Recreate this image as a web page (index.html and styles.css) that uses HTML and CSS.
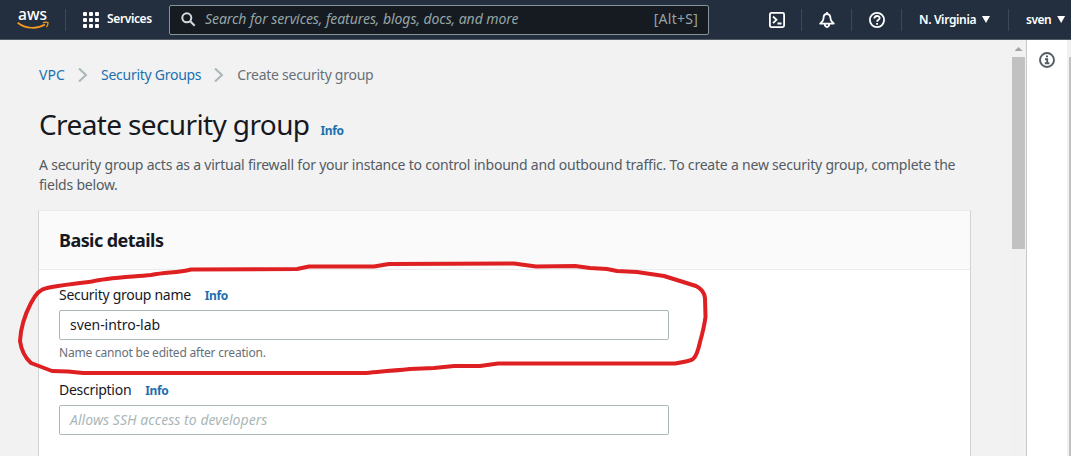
FILE: index.html
```html
<!DOCTYPE html>
<html lang="en">
<head>
<meta charset="utf-8">
<title>Create security group</title>
<link rel="stylesheet" href="styles.css">
</head>
<body>
<header class="topbar">
  <svg class="logo" width="34" height="36" viewBox="0 -6 34 36">
    <text class="logo-text" x="1" y="12" textLength="29" lengthAdjust="spacingAndGlyphs">aws</text>
    <path d="M.7 14.7C9 21 20 21.300 28 16.500" fill="none" stroke="#f79a20" stroke-width="1.700"/>
    <path d="M25.800 14.800Q29 13.800 31 14.500Q31.200 17 29.400 19.200" fill="none" stroke="#f79a20" stroke-width="1.200"/>
  </svg>
  <i class="divider"></i>
  <div class="services">
    <div class="grid"><b></b><b></b><b></b><b></b><b></b><b></b><b></b><b></b><b></b></div>
    <span class="services-label">Services</span>
  </div>
  <div class="search">
    <svg width="15" height="15" viewBox="0 0 15 15" fill="none" stroke="#d5dbdb" stroke-width="2"><circle cx="5.800" cy="5.800" r="4.500"/><path d="M9 9l4.700 4.700"/></svg>
    <span class="search-text">Search for services, features, blogs, docs, and more</span>
    <span class="shortcut">[Alt+S]</span>
  </div>
  <nav class="tools">
    <div class="tool"><svg width="16" height="16" viewBox="0 0 16 16" fill="none" stroke="#fff" stroke-width="1.800"><rect x=".9" y=".9" width="14.200" height="14.200" rx="1.500"/><path d="M4 4.500l3.500 3.300L4 11.200M8.500 11.500H12.500"/></svg></div>
    <div class="tool"><svg width="16" height="16" viewBox="0 0 16 16" fill="none" stroke="#fff" stroke-width="1.800" stroke-linejoin="round"><path d="M8 0v2M8 2C5.500 2 4.500 4 4.500 6.500C4.500 9 2.800 10 1.200 11.600H14.800C13.200 10 11.500 9 11.500 6.500C11.500 4 10.500 2 8 2zM5.700 12Q6 15 8 15T10.300 12"/></svg></div>
    <div class="tool"><svg width="16" height="16" viewBox="0 0 16 16" fill="none" stroke="#fff" stroke-width="1.800"><circle cx="8" cy="8" r="7.100"/><path d="M5.400 6.400C5.400 3.200 10.700 3.300 10.700 6C10.700 7.700 8.100 7.700 8.100 9.800M8.100 11v1.700"/></svg></div>
    <div class="region"><span class="region-label">N. Virginia</span><i class="caret"></i></div>
    <div class="user"><span class="user-label">sven</span><i class="caret"></i></div>
  </nav>
</header>
<div class="body">
  <main class="content">
    <nav class="crumbs">
      <a class="crumb-vpc">VPC</a>
      <svg width="10" height="16" viewBox="0 0 10 16"><path d="M1 1.500L8 8L1 14.500"/></svg>
      <a class="crumb-groups">Security Groups</a>
      <svg width="10" height="16" viewBox="0 0 10 16"><path d="M1 1.500L8 8L1 14.500"/></svg>
      <span class="crumb-current">Create security group</span>
    </nav>
    <div class="heading"><h1>Create security group</h1><a class="info">Info</a></div>
    <p class="intro"><span class="intro-first">A security group acts as a virtual firewall for your instance to control inbound and outbound traffic. To create a new security group, complete the</span><br><span class="intro-second">fields below.</span></p>
    <section class="card">
      <h2><span>Basic details</span></h2>
      <div class="fields">
        <div class="label-row"><span class="name-label">Security group name</span><a class="info">Info</a></div>
        <div class="input"><span class="value">sven-intro-lab</span></div>
        <div class="hint"><span>Name cannot be edited after creation.</span></div>
        <div class="label-row"><span class="desc-label">Description</span><a class="info">Info</a></div>
        <div class="input"><span class="placeholder">Allows SSH access to developers</span></div>
      </div>
    </section>
  </main>
  <div class="scrollbar"><i class="scroll-up"></i><i class="thumb"></i></div>
  <aside class="help-panel"><svg width="16" height="16" viewBox="0 0 16 16" fill="none" stroke="#545b64" stroke-width="1.900"><circle cx="8" cy="8" r="7"/><path d="M7 4.400h2M6 7.300h2.200v4M5.800 11.300h4.600"/></svg></aside>
  <div class="outer-scroll"><i></i></div>
</div>
<svg class="annotation" width="1071" height="456" viewBox="0 0 1071 456"><path d="M47 288C60 285 75 284 92 281.500C105 278 130 277 151 275C168 272 177 273 191 269.500L297 269L309 266.500L374 266.500L389 264L514 263.500L536 266.500L575 266L590 268L607 269L617 271L637 272L664 276L696 286Q704 290 705 298L705.500 317Q704 328 700 342Q697 356 693 359Q691 361 675 363.500L498 363.500L480 366L454 366L434 368L410 369C390 371 375 372 364 373L83 373L68 371.500L52 371L31 363Q22 355 20 341Q21 322 31 303Q38 289 47 288"/></svg>
</body>
</html>
```
FILE: styles.css
```css
* { box-sizing: border-box; }
body { margin: 0; width: 1071px; height: 456px; overflow: hidden; background: #f2f2f2; color: #16191f; font: 14px/20px "Noto Sans", "Open Sans", sans-serif; }
h1, h2, p { margin: 0; }
svg { display: block; flex: none; }
a { color: #1b70af; }
span { white-space: nowrap; }

.topbar { display: flex; align-items: center; height: 40px; background: #232f3e; border-bottom: 1px solid #545b64; color: #fff; }
.logo { margin: 0 14px 0 17px; }
.logo-text { font: 500 17px "Noto Sans", sans-serif; fill: #fff; }
.divider { width: 1px; height: 22px; background: #3d4855; }
.services { display: flex; align-items: center; width: 103px; padding-left: 17px; gap: 8px; }
.grid { display: grid; grid-template-columns: repeat(3, 4px); gap: 2px; }
.grid b { height: 4px; background: #fff; border-radius: 1px; }
.services-label { position: relative; top: -1px; font-size: 12px; font-weight: 600; letter-spacing: -.37px; }
.search { display: flex; align-items: center; width: 540px; height: 30px; padding: 0 10px 0 11px; border: 1px solid #879596; border-radius: 2px; background: #161b22; color: #95a5a6; }
.search-text { flex: 1; margin-left: 9px; padding-bottom: 1px; font-style: italic; letter-spacing: -.065px; }
.shortcut { padding-bottom: 1px; letter-spacing: .25px; }
.tools { display: flex; align-items: center; margin-left: 43px; }
.tool { display: flex; align-items: center; justify-content: center; width: 50px; height: 22px; border-right: 1px solid #3d4855; }
.region { display: flex; align-items: center; width: 107px; height: 22px; padding: 0 18px 0 17px; justify-content: space-between; border-right: 1px solid #3d4855; font-size: 12px; font-weight: 600; }
.user { display: flex; align-items: center; width: 57px; padding-left: 17px; gap: 6px; font-size: 12px; font-weight: 600; }
.region-label { letter-spacing: -.35px; }
.user-label { letter-spacing: -.5px; }
.caret { width: 8px; height: 7px; background: #fff; clip-path: polygon(0 0, 100% 0, 50% 100%); }

.body { display: flex; height: 416px; }
.content { width: 1010px; padding: 25px 39px 0; }
.crumbs { display: flex; align-items: center; height: 20px; gap: 13px; color: #687078; }
.crumbs path { fill: none; stroke: #aab7b8; stroke-width: 2; }
.crumbs a, .crumbs span { letter-spacing: -.27px; }
.crumbs .crumb-vpc { letter-spacing: .1px; }
.heading { display: flex; align-items: baseline; gap: 11px; margin-top: 21px; height: 36px; }
h1 { font-size: 28px; line-height: 36px; font-weight: 400; letter-spacing: -.62px; white-space: nowrap; }
.info { font-size: 12px; font-weight: 700; letter-spacing: -.4px; }
.heading .info { letter-spacing: -.4px; }
.intro { margin-top: 13px; color: #545b64; letter-spacing: -.21px; }
.card { width: 933px; height: 260px; margin: 15px 0 0 -1px; border: 1px solid #cfd3d4; border-top-color: #eaeded; background: #fff; }
h2 { height: 59px; padding: 18px 20px; border-bottom: 1px solid #eaeded; background: #fafafa; font-size: 18px; line-height: 22px; font-weight: 700; letter-spacing: -.56px; }
.fields { padding: 15px 20px; }
.label-row { display: flex; align-items: baseline; gap: 14px; height: 20px; letter-spacing: -.28px; }
.input { width: 610px; height: 30px; margin-top: 5px; padding: 4px 10px; border: 1px solid #aab7b8; border-radius: 2px; letter-spacing: -.05px; }
.placeholder { color: #aab7b8; font-style: italic; letter-spacing: .05px; }
.hint { height: 20px; margin: 3px 0 17px; color: #687078; font-size: 12px; letter-spacing: -.21px; }

.scrollbar { width: 16px; padding: 7px 1px 0 2px; background: #f1f1f1; }
.scroll-up { display: block; width: 8px; height: 4px; margin: 0 auto; background: #a3a3a3; clip-path: polygon(50% 0, 100% 100%, 0 100%); }
.thumb { display: block; height: 192px; margin-top: 6px; background: #c1c1c1; }
.help-panel { width: 41px; padding: 12px 0 0 12px; border-left: 1px solid #c6cacb; background: #fff; }
.outer-scroll { width: 4px; padding: 17px 0 0 2px; background: #f1f1f1; }
.outer-scroll i { display: block; height: 399px; background: #c1c1c1; }
.annotation { position: absolute; inset: 0; pointer-events: none; }
.annotation path { fill: none; stroke: #df2023; stroke-width: 4; stroke-linecap: round; stroke-linejoin: round; }
```
